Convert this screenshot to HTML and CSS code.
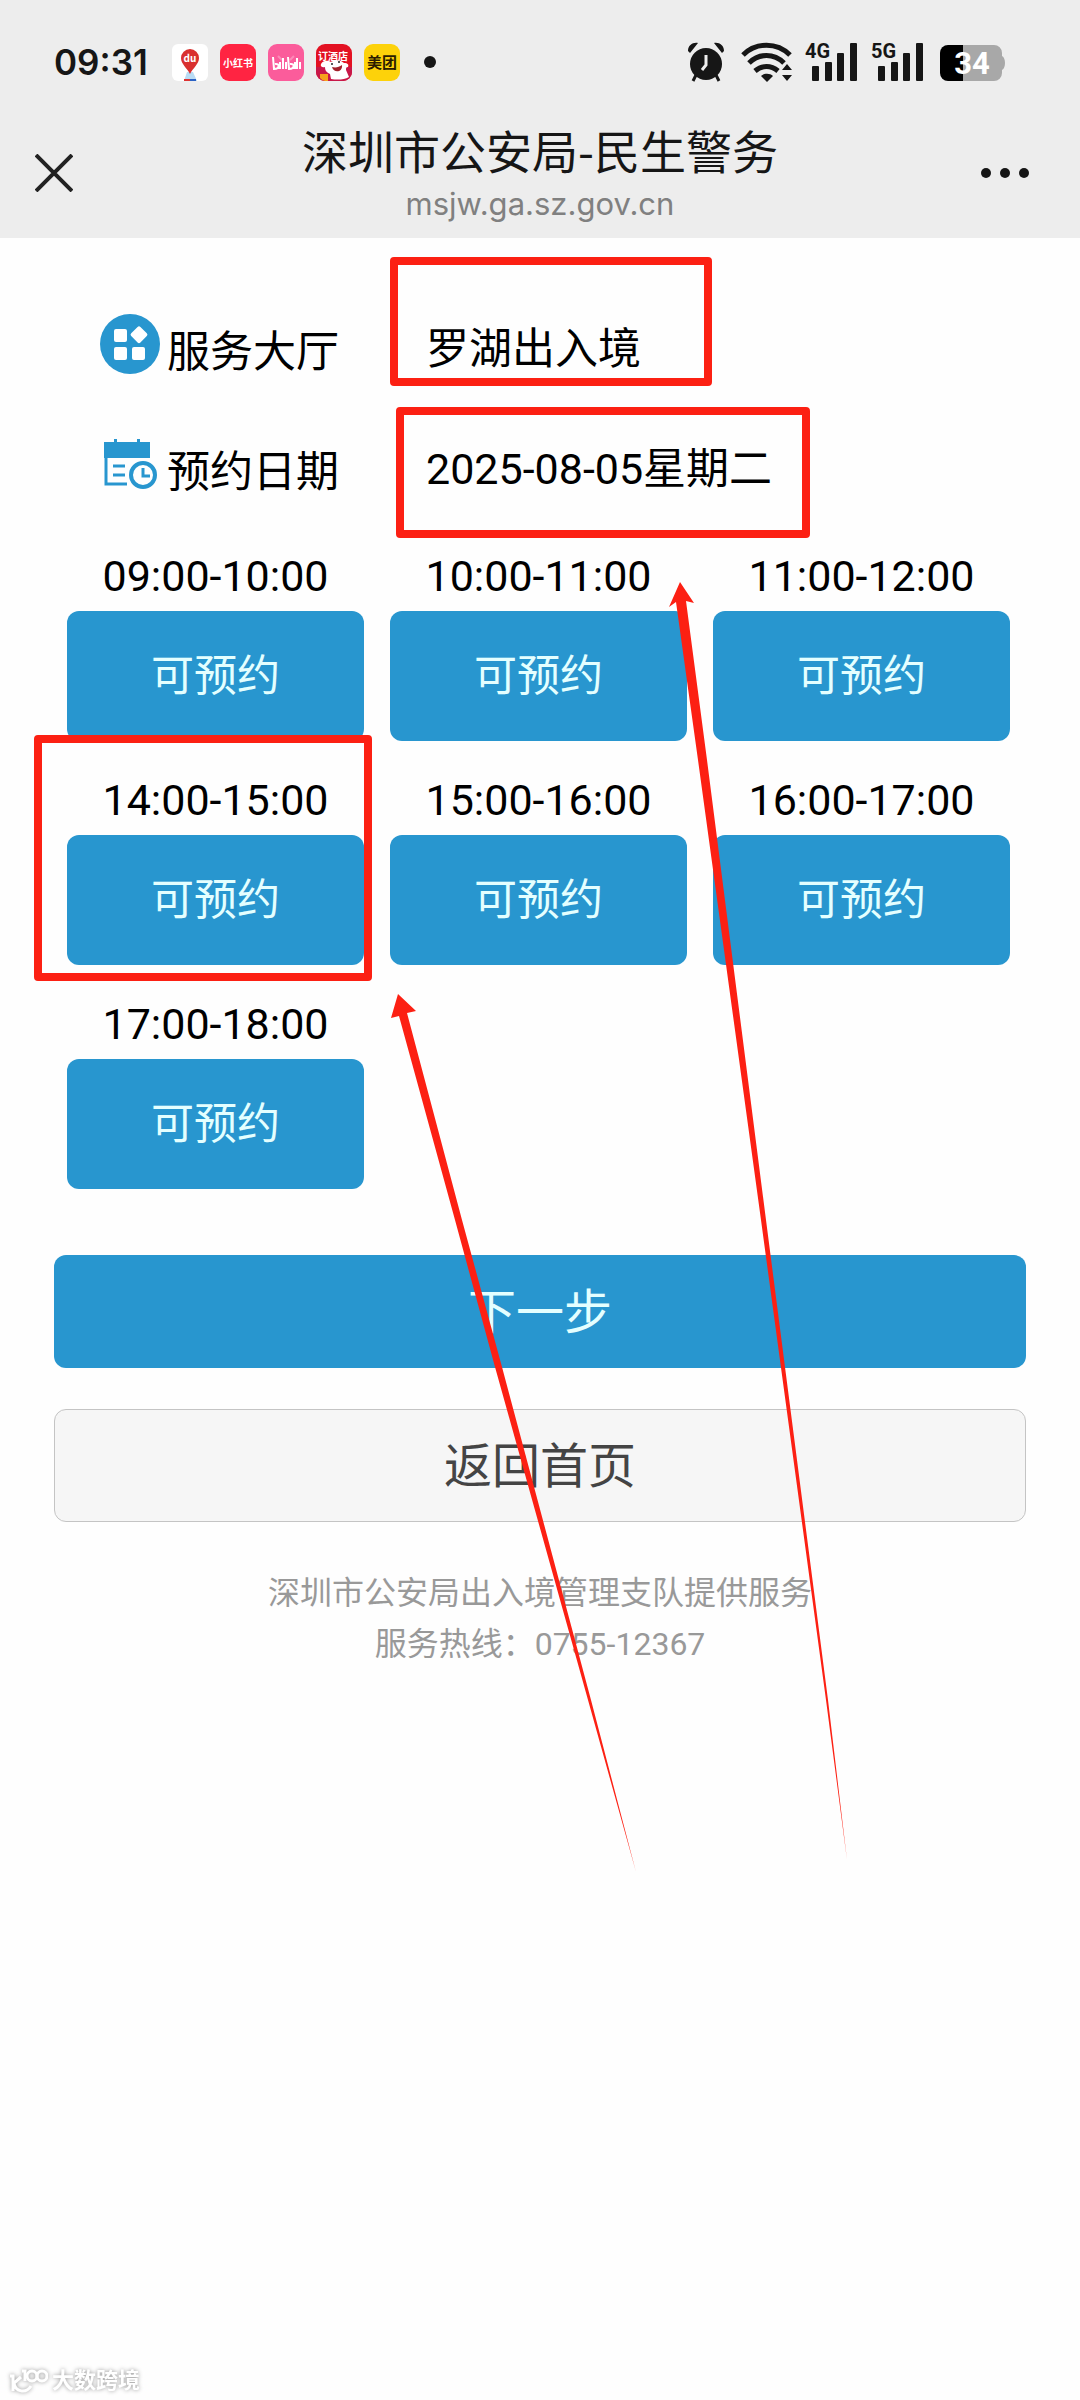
FILE: index.html
```html
<!DOCTYPE html>
<html lang="zh-CN">
<head>
<meta charset="utf-8">
<meta name="viewport" content="width=device-width, initial-scale=1">
<title>深圳市公安局-民生警务</title>
<link rel="stylesheet" href="styles.css">
</head>
<body>
<div class="screen">
  <header class="top">
    <div class="status">
      <span class="clock">09:31</span>
      <div class="apps">
        <svg class="app" viewBox="0 0 36 37" aria-hidden="true"><rect width="36" height="37" rx="6" fill="#fff"/><path d="M12 37L15 28H21L25 37Z" fill="#b9dcf4"/><path d="M12 35h12v2H12z" fill="#d33"/><path d="M18 35h6v2h-6z" fill="#2b62c4"/><path d="M18 30C15 24 9 20 9 14a9 9 0 0 1 18 0c0 6-6 10-9 16z" fill="#d9302f"/><text x="18" y="18" class="tiny du">du</text></svg>
        <svg class="app" viewBox="0 0 36 37" aria-hidden="true"><rect width="36" height="37" rx="9" fill="#ff2442"/><text x="18" y="23" class="tiny red">小红书</text></svg>
        <svg class="app" viewBox="0 0 36 37" aria-hidden="true"><rect width="36" height="37" rx="9" fill="#fb5c9b"/><path d="M10 12l4 4M26 12l-4 4" stroke="#fd8ab8" stroke-width="2"/><g fill="none" stroke="#fff" stroke-width="2"><path d="M5 13l1 12c6 0 6-6 1-5M12 18v7M15 14v11M18 18v7M20 13l1 12c6 0 6-6 1-5M27 18v7M29 14v11M32 18v7"/></g></svg>
        <svg class="app" viewBox="0 0 36 37" aria-hidden="true"><rect width="36" height="37" rx="9" fill="#e31122"/><path d="M0 23h36v5a9 9 0 0 1-9 9H9a9 9 0 0 1-9-9z" fill="#c81748"/><text x="17" y="16" class="tiny jd">订酒店</text><path d="M5 20c2-4 7-4 10-2 4-3 10-2 13 1 4 0 5 2 4 4-2 0-2 1-2 3l3 7c-5 3-12 3-18 2l-1-5c-4-2-5-4-5-7-3 1-5-1-4-3z" fill="#fff"/><path d="M16 23c4 1 7 0 10-2 1 7-8 9-10 2z" fill="#a3202a"/><circle cx="16" cy="20" r="1" fill="#222"/><circle cx="23" cy="18" r="1" fill="#222"/><path d="M4 30h8v7H9a9 9 0 0 1-5-3z" fill="#f6a21b"/></svg>
        <svg class="app" viewBox="0 0 36 37" aria-hidden="true"><rect width="36" height="37" rx="9" fill="#fdd20a"/><text x="18" y="24" class="tiny mt">美团</text></svg>
      </div>
      <span class="more-dot"></span>
      <svg class="sys" viewBox="0 -10 322 62" aria-hidden="true">
        <g fill="#161616">
          <circle cx="19" cy="23" r="16"/>
          <path d="M1 10C1 4 6 1 11 2L3 12zM37 10c0-6-5-9-10-8l8 10z"/>
          <path d="M9 34l-3 6M29 34l3 6" stroke="#161616" stroke-width="3"/>
          <path d="M19 14v10l-4 5" fill="none" stroke="#eee" stroke-width="3"/>
          <g fill="none" stroke="#161616" stroke-width="5">
            <path d="M56 14C69 1 90 1 103 14"/><path d="M62 22c10-10 25-10 35 0"/><path d="M68 30c7-6 16-6 23 0"/>
          </g>
          <path d="M74 35c3-3 9-3 12 0l-6 6z"/>
          <path d="M95 29l5-6 5 6zM95 34h10l-5 6z"/>
          <rect x="125" y="25" width="7" height="15" rx="1"/><rect x="138" y="21" width="7" height="19" rx="1"/><rect x="150" y="12" width="7" height="28" rx="1"/><rect x="163" y="2" width="7" height="38" rx="1"/>
          <rect x="191" y="25" width="7" height="15" rx="1"/><rect x="204" y="21" width="7" height="19" rx="1"/><rect x="216" y="12" width="7" height="28" rx="1"/><rect x="229" y="2" width="7" height="38" rx="1"/>
          <text x="118" y="17" class="net">4G</text><text x="184" y="17" class="net">5G</text>
        </g>
        <path d="M261 4h46a8 8 0 0 1 8 8v3c4 2 4 12 0 14v3a8 8 0 0 1-8 8h-46z" fill="#a8a8a8"/>
        <path d="M276 4h-15a8 8 0 0 0-8 8v20a8 8 0 0 0 8 8h15z" fill="#000"/>
        <text x="285" y="33" class="batt">34</text>
      </svg>
    </div>
    <div class="nav">
      <button class="icon-btn" aria-label="关闭"><svg viewBox="0 0 38 38" width="38" height="38"><path d="M1 1L37 37M37 1L1 37" stroke="#222" stroke-width="4"/></svg></button>
      <div class="titles">
        <h1>深圳市公安局-民生警务</h1>
        <p>msjw.ga.sz.gov.cn</p>
      </div>
      <button class="icon-btn end" aria-label="更多"><svg viewBox="0 0 48 10" width="48" height="10" fill="#161616"><circle cx="5" cy="5" r="5"/><circle cx="24" cy="5" r="5"/><circle cx="43" cy="5" r="5"/></svg></button>
    </div>
  </header>

  <main>
    <dl class="info">
      <div class="row">
        <dt><svg viewBox="0 0 60 60" width="60" height="60" aria-hidden="true"><circle cx="30" cy="30" r="30" fill="#2896cf"/><g fill="#fff"><rect x="14" y="15" width="13" height="13" rx="2"/><rect x="14" y="33" width="13" height="13" rx="2"/><rect x="32" y="33" width="13" height="13" rx="2"/><rect x="33" y="14" width="13" height="13" rx="2" transform="rotate(45 39 20)"/></g></svg><span>服务大厅</span></dt>
        <dd><span>罗湖出入境</span></dd>
      </div>
      <div class="row">
        <dt><svg viewBox="0 0 60 60" width="60" height="60" aria-hidden="true"><path d="M4 8h10V5h3v3h20V5h3v3h10v16H4z" fill="#2896cf"/><path d="M6 24v26H27M13 32h12M13 41h12" fill="none" stroke="#2896cf" stroke-width="3"/><circle cx="43" cy="41" r="12" fill="#fefefe" stroke="#2896cf" stroke-width="4"/><path d="M43 34v8H50" fill="none" stroke="#2896cf" stroke-width="3"/></svg><span>预约日期</span></dt>
        <dd><span>2025-08-05星期二</span></dd>
      </div>
    </dl>

    <ul class="slots">
      <li><span id="s1">09:00-10:00</span><button aria-describedby="s1">可预约</button></li>
      <li><span id="s2">10:00-11:00</span><button aria-describedby="s2">可预约</button></li>
      <li><span id="s3">11:00-12:00</span><button aria-describedby="s3">可预约</button></li>
      <li><span id="s4">14:00-15:00</span><button aria-describedby="s4">可预约</button></li>
      <li><span id="s5">15:00-16:00</span><button aria-describedby="s5">可预约</button></li>
      <li><span id="s6">16:00-17:00</span><button aria-describedby="s6">可预约</button></li>
      <li><span id="s7">17:00-18:00</span><button aria-describedby="s7">可预约</button></li>
    </ul>

    <div class="actions">
      <button class="primary">下一步</button>
      <button class="plain">返回首页</button>
    </div>
  </main>

  <footer>
    <p>深圳市公安局出入境管理支队提供服务</p>
    <p>服务热线：0755-12367</p>
  </footer>

  <!-- hand-drawn marks over the page -->
  <svg class="marks" viewBox="0 0 1080 2400" aria-hidden="true">
    <g fill="none" stroke="#fc2013" stroke-width="8" stroke-linejoin="round">
      <rect x="394" y="261" width="314" height="121"/>
      <rect x="400" y="411" width="406" height="123"/>
      <rect x="38" y="739" width="330" height="238"/>
    </g>
    <g fill="#fc2013">
      <path d="M398 994L416 1011L407 1013L462 1220L502 1367L591 1700L636 1872L588 1700L495 1367L455 1220L399 1016L391 1018Z"/>
      <path d="M680 582L694 603L686 601L707 760L766 1220L828 1700L847 1860L826 1700L761 1220L698 760L676 602L669 607Z"/>
    </g>
  </svg>
  <div class="watermark"><svg viewBox="0 0 40 26" width="40" height="26" aria-hidden="true"><g fill="none" stroke="#fff" stroke-width="3"><path d="M2 8h3v15M13 9L6 15c1 9 12 11 17 3M14 3h3v10"/><circle cx="24" cy="8" r="5"/><circle cx="34" cy="8" r="5"/></g></svg><span>大数跨境</span></div>
</div>
</body>
</html>
```
FILE: styles.css
```css
* { box-sizing: border-box; margin: 0; padding: 0; }
body { background: #fefefe; color: #000; font-family: Roboto, "Noto Sans CJK SC", sans-serif; }
button { border: 0; background: none; font: inherit; color: inherit; }
svg { display: block; flex: none; }

.screen { position: relative; min-height: 100vh; }

.top { height: 238px; background: #ededed; color: #161616; }
.status { display: flex; align-items: center; height: 124px; padding: 0 71px 0 54px; }
.clock { width: 118px; font: 600 35px/42px Inter, sans-serif; }
.apps { display: flex; gap: 12px; }
.app { width: 36px; height: 37px; }
.more-dot { width: 12px; height: 12px; margin-left: 24px; border-radius: 50%; background: #161616; }
.sys { width: 322px; height: 62px; margin-left: auto; }
.tiny { font-family: "Noto Sans CJK SC", sans-serif; font-weight: 700; text-anchor: middle; fill: #fff; }
.du { font-size: 10px; }
.red { font-size: 10px; }
.jd { font-size: 10px; }
.mt { font-size: 15px; fill: #2a1c00; }
.net { font: 700 20px Roboto, sans-serif; }
.batt { font: 700 31px Roboto, sans-serif; text-anchor: middle; fill: #fff; }

.nav { display: grid; grid-template-columns: 120px 1fr 120px; }
.icon-btn { display: flex; align-items: center; height: 98px; padding-left: 35px; }
.icon-btn.end { justify-content: flex-end; padding: 0 51px 0 0; }
.titles { text-align: center; }
.titles h1 { font: 400 46px/50px "Noto Sans CJK SC", sans-serif; }
.titles p { margin-top: 7px; font: 400 31px/46px Inter, sans-serif; color: #808080; }

.info { padding: 64px 100px 0; font-size: 43px; line-height: 60px; }
.row { display: flex; height: 120px; }
.row dt { display: flex; width: 326px; gap: 7px; }
.row dt svg { margin-top: 12px; }
.row dt span { padding-top: 20px; }
.row dd { padding-top: 17px; }

.slots { display: grid; grid-template-columns: repeat(3, 1fr); gap: 25px 26px; padding: 0 70px 0 67px; list-style: none; font-size: 43px; }
.slots li { display: flex; flex-direction: column; text-align: center; }
.slots span { line-height: 69px; }
.slots button { height: 130px; padding-bottom: 8px; border-radius: 12px; background: #2896cf; color: #e4ffff; }

.actions { display: flex; flex-direction: column; gap: 41px; padding: 66px 54px 0; }
.actions button { height: 113px; padding-bottom: 8px; border-radius: 12px; font-size: 48px; }
.primary { background: #2896cf; color: #e4ffff; }
.actions .plain { border: 1px solid #c4c4c4; background: #f6f6f6; color: #444; }

footer { padding-top: 46px; text-align: center; font-size: 32px; line-height: 51px; color: #999; }

.marks { position: absolute; top: 0; left: 0; width: 100%; pointer-events: none; }
.watermark { position: absolute; left: 8px; bottom: 5px; display: flex; align-items: center; gap: 4px; height: 28px; color: #fff; font-size: 22px; font-weight: 700; line-height: 28px; filter: drop-shadow(0 0 2px #999); }
```
